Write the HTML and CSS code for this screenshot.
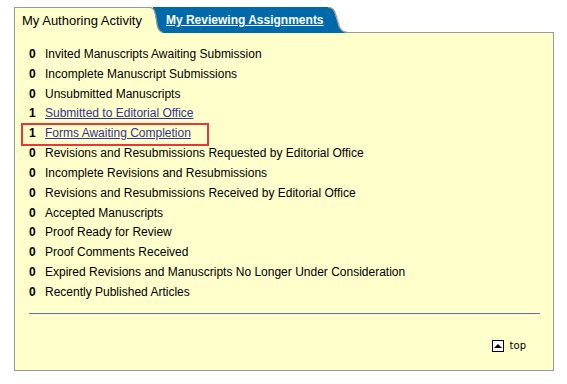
FILE: index.html
```html
<!DOCTYPE html>
<html lang="en">
<head>
  <meta charset="UTF-8">
  <title>Author Dashboard</title>
  <link rel="stylesheet" href="styles.css">
</head>
<body>

  <div class="page">
    <div class="tabs">
      <div class="tab tab-active">
        <span class="tab-label">My Authoring Activity</span>
        <svg class="ear" width="14" height="26" viewBox="0 0 14 26">
          <path d="M0,0 L1,0 C4,0 5,3 6,7 L8,19 C9,23 11,25 14,25 L14,26 L0,26 Z" fill="#ffffcc"/>
          <path d="M0,0.5 L1,0.5 C4,0.5 5.5,3 6.5,7 L8.5,19 C9.5,23 11,25 14,25.5" fill="none" stroke="#999" stroke-width="1.2"/>
        </svg>
      </div>
      <div class="tab tab-other">
        <a href="#" class="tab-link">My Reviewing Assignments</a>
        <svg class="ear" width="22" height="26" viewBox="0 0 22 26">
          <path d="M0,0 L2,0 C6,0 8,3 9,7 L13,20 C15,24 18,25 22,25 L22,26 L0,26 Z" fill="#0069a9"/>
          <path d="M2,0.5 C6,0.5 8.5,3 9.5,7 L13.5,20 C15.5,24 18,25.5 22,25.5" fill="none" stroke="#999" stroke-width="1.2"/>
        </svg>
      </div>
    </div>

    <div class="panel">
      <ul class="counts">
        <li><b>0</b><span>Invited Manuscripts Awaiting Submission</span></li>
        <li><b>0</b><span>Incomplete Manuscript Submissions</span></li>
        <li><b>0</b><span>Unsubmitted Manuscripts</span></li>
        <li><b>1</b><a href="#">Submitted to Editorial Office</a></li>
        <li class="highlight"><b>1</b><a href="#">Forms Awaiting Completion</a></li>
        <li><b>0</b><span>Revisions and Resubmissions Requested by Editorial Office</span></li>
        <li><b>0</b><span>Incomplete Revisions and Resubmissions</span></li>
        <li><b>0</b><span>Revisions and Resubmissions Received by Editorial Office</span></li>
        <li><b>0</b><span>Accepted Manuscripts</span></li>
        <li><b>0</b><span>Proof Ready for Review</span></li>
        <li><b>0</b><span>Proof Comments Received</span></li>
        <li><b>0</b><span>Expired Revisions and Manuscripts No Longer Under Consideration</span></li>
        <li><b>0</b><span>Recently Published Articles</span></li>
      </ul>

      <hr class="divider">

      <div class="top-link">
        <span class="top-icon"></span>
        <span>top</span>
      </div>
    </div>
  </div>

</body>
</html>
```

FILE: styles.css
```css
body {
  margin: 0;
  font-family: "Liberation Sans", Arial, sans-serif;
  background: #fff;
  color: #000;
}

.page {
  padding: 7px 13px 0 14px;
}

.tabs {
  display: flex;
  height: 26px;
  margin-bottom: -1px;
  position: relative;
  z-index: 1;
}

.tab {
  display: flex;
  align-items: stretch;
  font-size: 13px;
}

.tab-label,
.tab-link {
  display: flex;
  align-items: center;
  padding-bottom: 1px;
}

.ear {
  display: block;
  flex-shrink: 0;
}

.tab-active {
  position: relative;
  z-index: 2;
}

.tab-active .tab-label {
  background: #ffffcc;
  border-top: 1px solid #999;
  border-left: 1px solid #999;
  padding: 0 7px 0 7px;
  height: 25px;
}

.tab-other {
  margin-left: -10px;
}

.tab-other .tab-link {
  background: #0069a9;
  color: #fff;
  font-size: 12px;
  font-weight: bold;
  padding: 0 2px 0 13px;
  height: 26px;
}

.panel {
  border: 1px solid #999;
  background: #ffffcc;
  padding: 12px 13px 18px 14px;
}

.counts {
  list-style: none;
  margin: 0;
  padding: 0;
  font-size: 12px;
  line-height: 19.83px;
}

.counts li {
  display: flex;
}

.counts b {
  width: 16px;
}

.counts a {
  color: #333399;
}

.highlight {
  position: relative;
}

.highlight::after {
  content: "";
  position: absolute;
  left: -8px;
  top: -1px;
  width: 184px;
  height: 19px;
  border: 2px solid #e8373c;
}

.divider {
  margin: 10px 0 0 0;
  height: 0;
  border: 0;
  border-top: 1px solid #6e7188;
  border-bottom: 1px solid #f6f6f0;
}

.top-link {
  display: flex;
  justify-content: flex-end;
  align-items: center;
  gap: 6px;
  margin-top: 25px;
  padding-right: 14px;
  font-family: "DejaVu Sans", Verdana, sans-serif;
  font-size: 10px;
  line-height: 12px;
}

.top-icon {
  width: 10px;
  height: 10px;
  border: 1px solid #000;
  background: #fff;
  position: relative;
}

.top-icon::after {
  content: "";
  position: absolute;
  left: 1px;
  top: 3px;
  border-left: 4px solid transparent;
  border-right: 4px solid transparent;
  border-bottom: 4px solid #000;
}
```
